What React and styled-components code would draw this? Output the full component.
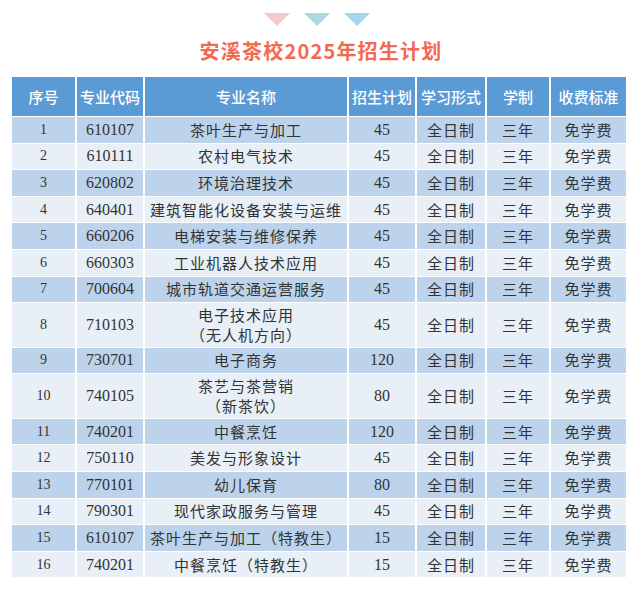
import React from "react";
import styled, { createGlobalStyle } from "styled-components";

const Global = createGlobalStyle`
  html, body { margin: 0; padding: 0; background: #ffffff; }
  body { font-family: "Noto Sans CJK SC", "Noto Sans", sans-serif; }
`;

const Page = styled.div`
  width: 637px;
  height: 599px;
  box-sizing: border-box;
  padding: 13px 11px 0 12px;
  display: flex;
  flex-direction: column;
  align-items: center;
`;

const Marks = styled.div`
  display: flex;
  gap: 14px;
  height: 13px;
  margin-left: -5px;
`;

const Triangle = styled.span`
  width: 0;
  height: 0;
  border-left: 13px solid transparent;
  border-right: 13px solid transparent;
  border-top: 13px solid ${(p) => p.$color};
`;

const Title = styled.h1`
  margin: 10px 0 0 4px;
  height: 30px;
  line-height: 30px;
  font-family: "Noto Sans CJK SC", sans-serif;
  font-weight: 700;
  font-size: 20px;
  letter-spacing: 1.2px;
  color: #f36a52;
`;

const Table = styled.table`
  margin-top: 11px;
  width: 614px;
  table-layout: fixed;
  border-collapse: separate;
  border-spacing: 0;
`;

const HeadCell = styled.th`
  height: 40px;
  box-sizing: border-box;
  padding: 0;
  background: #5b9bd5;
  color: #ffffff;
  font-family: "Noto Sans CJK SC", sans-serif;
  font-weight: 500;
  font-size: 15px;
  white-space: nowrap;
  text-align: center;
  border-right: 2px solid #ffffff;
  border-bottom: 1px solid #ffffff;
  &:last-child { border-right: none; }
`;

const Row = styled.tr`
  background: ${(p) => (p.$odd ? "#bdd3eb" : "#e8eff7")};
`;

const Cell = styled.td`
  height: ${(p) => (p.$tall ? "44.5px" : "26.6px")};
  box-sizing: border-box;
  padding: 0;
  text-align: center;
  color: #333333;
  border-right: 2px solid #ffffff;
  border-bottom: 1px solid #ffffff;
  white-space: nowrap;
  font-family: ${(p) =>
    p.$num ? '"Liberation Serif", serif' : '"Noto Sans CJK SC", sans-serif'};
  font-size: ${(p) => (p.$small ? "14px" : p.$num ? "16px" : "15px")};
  letter-spacing: ${(p) => (p.$num ? "0" : "1px")};
  line-height: 20px;
  &:last-child { border-right: none; }
`;

const cols = [65, 68, 204, 68, 70, 64, 75];
const heads = ["序号", "专业代码", "专业名称", "招生计划", "学习形式", "学制", "收费标准"];

const rows = [
  ["610107", ["茶叶生产与加工"], "45"],
  ["610111", ["农村电气技术"], "45"],
  ["620802", ["环境治理技术"], "45"],
  ["640401", ["建筑智能化设备安装与运维"], "45"],
  ["660206", ["电梯安装与维修保养"], "45"],
  ["660303", ["工业机器人技术应用"], "45"],
  ["700604", ["城市轨道交通运营服务"], "45"],
  ["710103", ["电子技术应用", "（无人机方向）"], "45"],
  ["730701", ["电子商务"], "120"],
  ["740105", ["茶艺与茶营销", "（新茶饮）"], "80"],
  ["740201", ["中餐烹饪"], "120"],
  ["750110", ["美发与形象设计"], "45"],
  ["770101", ["幼儿保育"], "80"],
  ["790301", ["现代家政服务与管理"], "45"],
  ["610107", ["茶叶生产与加工（特教生）"], "15"],
  ["740201", ["中餐烹饪（特教生）"], "15"],
];

export default function App() {
  return (
    <Page>
      <Global />
      <Marks>
        <Triangle $color="#f5c8d0" />
        <Triangle $color="#a9dade" />
        <Triangle $color="#a5d6f0" />
      </Marks>
      <Title>安溪茶校2025年招生计划</Title>
      <Table>
        <colgroup>
          {cols.map((w, i) => (
            <col key={i} style={{ width: w }} />
          ))}
        </colgroup>
        <thead>
          <tr>
            {heads.map((h) => (
              <HeadCell key={h}>{h}</HeadCell>
            ))}
          </tr>
        </thead>
        <tbody>
          {rows.map(([code, name, plan], i) => {
            const tall = name.length > 1;
            return (
              <Row key={i} $odd={i % 2 === 0}>
                <Cell $num $small $tall={tall}>{i + 1}</Cell>
                <Cell $num $tall={tall}>{code}</Cell>
                <Cell $tall={tall}>
                  {name.map((n, j) => (
                    <div key={j}>{n}</div>
                  ))}
                </Cell>
                <Cell $num $tall={tall}>{plan}</Cell>
                <Cell $tall={tall}>全日制</Cell>
                <Cell $tall={tall}>三年</Cell>
                <Cell $tall={tall}>免学费</Cell>
              </Row>
            );
          })}
        </tbody>
      </Table>
    </Page>
  );
}
